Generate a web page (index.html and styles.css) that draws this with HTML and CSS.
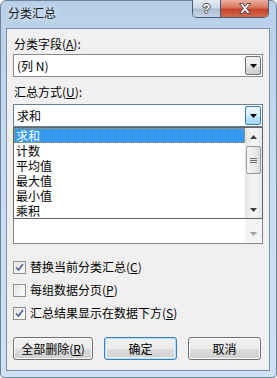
FILE: index.html
```html
<!DOCTYPE html>
<html lang="zh-CN">
<head>
  <meta charset="UTF-8" />
  <title>分类汇总</title>
  <link rel="stylesheet" href="styles.css">
</head>
<body>
  <div class="window">
    <div class="titlebar">
      <div class="title">分类汇总</div>
      <div class="caption-buttons">
        <div class="cap-btn help">?</div>
        <div class="cap-btn close">
          <svg width="14" height="11" viewBox="0 0 14 11">
            <path d="M1.5 0.5h3.2l2.3 3 2.3-3h3.2l-3.9 5 3.9 5h-3.2l-2.3-3-2.3 3h-3.2l3.9-5z" fill="#fff" stroke="#4a4a4a" stroke-width="1"/>
          </svg>
        </div>
      </div>
    </div>

    <div class="client">
      <div class="label">分类字段(<u>A</u>):</div>
      <div class="combo">
        <div class="combo-text">(列 N)</div>
        <div class="combo-btn">
          <svg width="7" height="4" viewBox="0 0 7 4"><path d="M0 0h7L3.5 4z" fill="#000"/></svg>
        </div>
      </div>

      <div class="label label-gap">汇总方式(<u>U</u>):</div>
      <div class="combo-wrap">
        <div class="combo combo-open">
          <div class="combo-text">求和</div>
          <div class="combo-btn">
            <svg width="7" height="4" viewBox="0 0 7 4"><path d="M0 0h7L3.5 4z" fill="#000"/></svg>
          </div>
        </div>

        <div class="dropdown">
          <div class="dropdown-items">
            <div class="dropdown-item selected">求和</div>
            <div class="dropdown-item">计数</div>
            <div class="dropdown-item">平均值</div>
            <div class="dropdown-item">最大值</div>
            <div class="dropdown-item">最小值</div>
            <div class="dropdown-item">乘积</div>
          </div>
          <div class="scrollbar">
            <div class="sb-arrow">
              <svg width="7" height="4" viewBox="0 0 7 4"><path d="M0 4h7L3.5 0z" fill="#404040"/></svg>
            </div>
            <div class="sb-thumb">
              <div class="grip"></div>
              <div class="grip"></div>
              <div class="grip"></div>
            </div>
            <div class="sb-track"></div>
            <div class="sb-arrow">
              <svg width="7" height="4" viewBox="0 0 7 4"><path d="M0 0h7L3.5 4z" fill="#404040"/></svg>
            </div>
          </div>
        </div>
      </div>

      <!-- the field list sits under the open dropdown -->
      <div class="listbox">
        <div class="listbox-body"></div>
        <div class="listbox-scroll">
          <svg width="7" height="4" viewBox="0 0 7 4"><path d="M0 0h7L3.5 4z" fill="#a0a0a0"/></svg>
        </div>
      </div>

      <div class="checks">
        <div class="check-row">
          <span class="checkbox checked">
            <svg width="9" height="9" viewBox="0 0 9 9"><path d="M1 4.5l2.5 2.5 4.5-6" fill="none" stroke="#4b5f96" stroke-width="1.6"/></svg>
          </span>
          <span>替换当前分类汇总(<u>C</u>)</span>
        </div>
        <div class="check-row">
          <span class="checkbox"></span>
          <span>每组数据分页(<u>P</u>)</span>
        </div>
        <div class="check-row">
          <span class="checkbox checked">
            <svg width="9" height="9" viewBox="0 0 9 9"><path d="M1 4.5l2.5 2.5 4.5-6" fill="none" stroke="#4b5f96" stroke-width="1.6"/></svg>
          </span>
          <span>汇总结果显示在数据下方(<u>S</u>)</span>
        </div>
      </div>

      <div class="buttons">
        <button class="btn btn-wide">全部删除(<u>R</u>)</button>
        <button class="btn btn-default">确定</button>
        <button class="btn">取消</button>
      </div>
    </div>
  </div>
</body>
</html>
```

FILE: styles.css
```css
body, html {
  margin: 0;
  padding: 0;
  height: 100%;
  overflow: hidden;
  font-family: "Noto Sans CJK SC", "Liberation Sans", sans-serif;
  font-size: 12px;
  color: #000;
}
.window {
  width: 277px;
  height: 378px;
  box-sizing: border-box;
  border: 1px solid #6f8399;
  border-radius: 6px 6px 4px 4px;
  background: linear-gradient(to bottom, #b7cfe8 0%, #c7dbf0 40%, #cfe1f4 100%);
  display: flex;
  flex-direction: column;
}
.titlebar {
  height: 27px;
  display: flex;
  justify-content: space-between;
  align-items: flex-start;
}
.title {
  padding: 4px 0 0 7px;
  line-height: 16px;
  color: #1a1a1a;
  text-shadow: 0 0 6px rgba(255, 255, 255, 0.9);
}
.caption-buttons {
  display: flex;
  margin-right: 7px;
  margin-top: -1px;
  border: 1px solid #4b5d72;
  border-top: none;
  border-radius: 0 0 5px 5px;
  overflow: hidden;
}
.cap-btn {
  height: 17px;
  display: flex;
  align-items: center;
  justify-content: center;
}
.help {
  width: 27px;
  border-right: 1px solid #4b5d72;
  background: linear-gradient(to bottom, #e4ecf5 0%, #cbd9e8 45%, #aebfd2 55%, #c6d6e6 100%);
  color: #fff;
  font-family: "Liberation Sans", sans-serif;
  font-weight: bold;
  font-size: 13px;
  text-shadow: 1px 0 0 #4a4a4a, -1px 0 0 #4a4a4a, 0 1px 0 #4a4a4a, 0 -1px 0 #4a4a4a;
}
.close {
  width: 47px;
  background: linear-gradient(to bottom, #eab1a3 0%, #d9735d 45%, #c5432a 55%, #d66a4f 100%);
}
.client {
  flex: 1;
  margin: 0 6px 6px 5px;
  border: 1px solid #7d90a6;
  background: #f0f0f0;
  padding: 7px 6px 0 6px;
  display: flex;
  flex-direction: column;
}
.label {
  line-height: 16px;
  height: 16px;
  padding-left: 1px;
}
.label-gap {
  margin-top: 7px;
}
.combo {
  margin-top: 2px;
  height: 23px;
  box-sizing: border-box;
  border: 1px solid #8a8a8a;
  background: #fff;
  display: flex;
  align-items: stretch;
}
.combo-wrap {
  position: relative;
  margin-top: 4px;
}
.combo-wrap .combo {
  margin-top: 0;
}
.combo-text {
  flex: 1;
  padding-left: 3px;
  line-height: 21px;
}
.combo-btn {
  width: 16px;
  margin: 1px;
  box-sizing: border-box;
  border: 1px solid #707070;
  border-radius: 2px;
  background: linear-gradient(to bottom, #f2f2f2 0%, #ebebeb 50%, #dddddd 51%, #cfcfcf 100%);
  display: flex;
  align-items: center;
  justify-content: center;
}
.combo-open {
  border-color: #6a7f94;
}
.combo-open .combo-btn {
  border-color: #3c7fb1;
  background: linear-gradient(to bottom, #eaf6fd 0%, #d9f0fc 50%, #bee6fd 51%, #a7d9f5 100%);
}
.dropdown {
  position: absolute;
  top: 100%;
  left: 0;
  right: 0;
  height: 92px;
  box-sizing: border-box;
  border: 1px solid #646464;
  background: #fff;
  display: flex;
  z-index: 5;
}
.dropdown-items {
  flex: 1;
}
.dropdown-item {
  height: 15px;
  line-height: 15px;
  padding-left: 2px;
  box-sizing: border-box;
}
.dropdown-item.selected {
  background: #3399ff;
  color: #fff;
  outline: 1px dotted #d98a2b;
  outline-offset: -1px;
}
.scrollbar {
  width: 17px;
  display: flex;
  flex-direction: column;
  background: linear-gradient(to right, #e3e3e3 0%, #f2f2f2 40%, #f2f2f2 70%, #e6e6e6 100%);
}
.sb-arrow {
  height: 17px;
  display: flex;
  align-items: center;
  justify-content: center;
}
.sb-thumb {
  height: 28px;
  margin: 1px 1px 0 1px;
  box-sizing: border-box;
  border: 1px solid #9a9a9a;
  border-radius: 2px;
  background: linear-gradient(to right, #f4f4f4 0%, #ececec 50%, #dcdcdc 100%);
  display: flex;
  flex-direction: column;
  align-items: center;
  justify-content: center;
  gap: 1px;
}
.grip {
  width: 7px;
  height: 1px;
  background: #6d6d6d;
}
.sb-track {
  flex: 1;
}
.listbox {
  margin-top: 23px;
  height: 94px;
  box-sizing: border-box;
  border: 1px solid #828790;
  background: #fff;
  display: flex;
}
.listbox-body {
  flex: 1;
}
.listbox-scroll {
  width: 17px;
  background: #f4f4f4;
  display: flex;
  align-items: flex-end;
  justify-content: center;
  padding-bottom: 7px;
}
.checks {
  margin-top: 15px;
  display: flex;
  flex-direction: column;
  gap: 7px;
}
.check-row {
  height: 16px;
  line-height: 16px;
  display: flex;
  align-items: center;
  gap: 4px;
}
.checkbox {
  width: 13px;
  height: 13px;
  box-sizing: border-box;
  border: 1px solid #8e8f8f;
  background: linear-gradient(135deg, #dcdcdc 0%, #f0f0f0 50%, #ffffff 100%);
  box-shadow: inset 0 0 0 1px #f4f4f4;
  display: flex;
  align-items: center;
  justify-content: center;
}
.buttons {
  margin-top: 16px;
  display: flex;
  gap: 11px;
}
.btn {
  width: 73px;
  height: 23px;
  padding: 0;
  box-sizing: border-box;
  font-family: "Noto Sans CJK SC", "Liberation Sans", sans-serif;
  font-size: 12px;
  color: #000;
  border: 1px solid #707070;
  border-radius: 3px;
  background: linear-gradient(to bottom, #f2f2f2 0%, #ebebeb 50%, #dddddd 51%, #cfcfcf 100%);
  box-shadow: inset 0 0 0 1px #fcfcfc;
  line-height: 19px;
}
.btn-wide {
  width: 80px;
}
.btn-default {
  border-color: #3c7fb1;
  box-shadow: inset 0 0 0 1px #b5e2fa, inset 0 0 0 2px #e6f3fb;
}
```
